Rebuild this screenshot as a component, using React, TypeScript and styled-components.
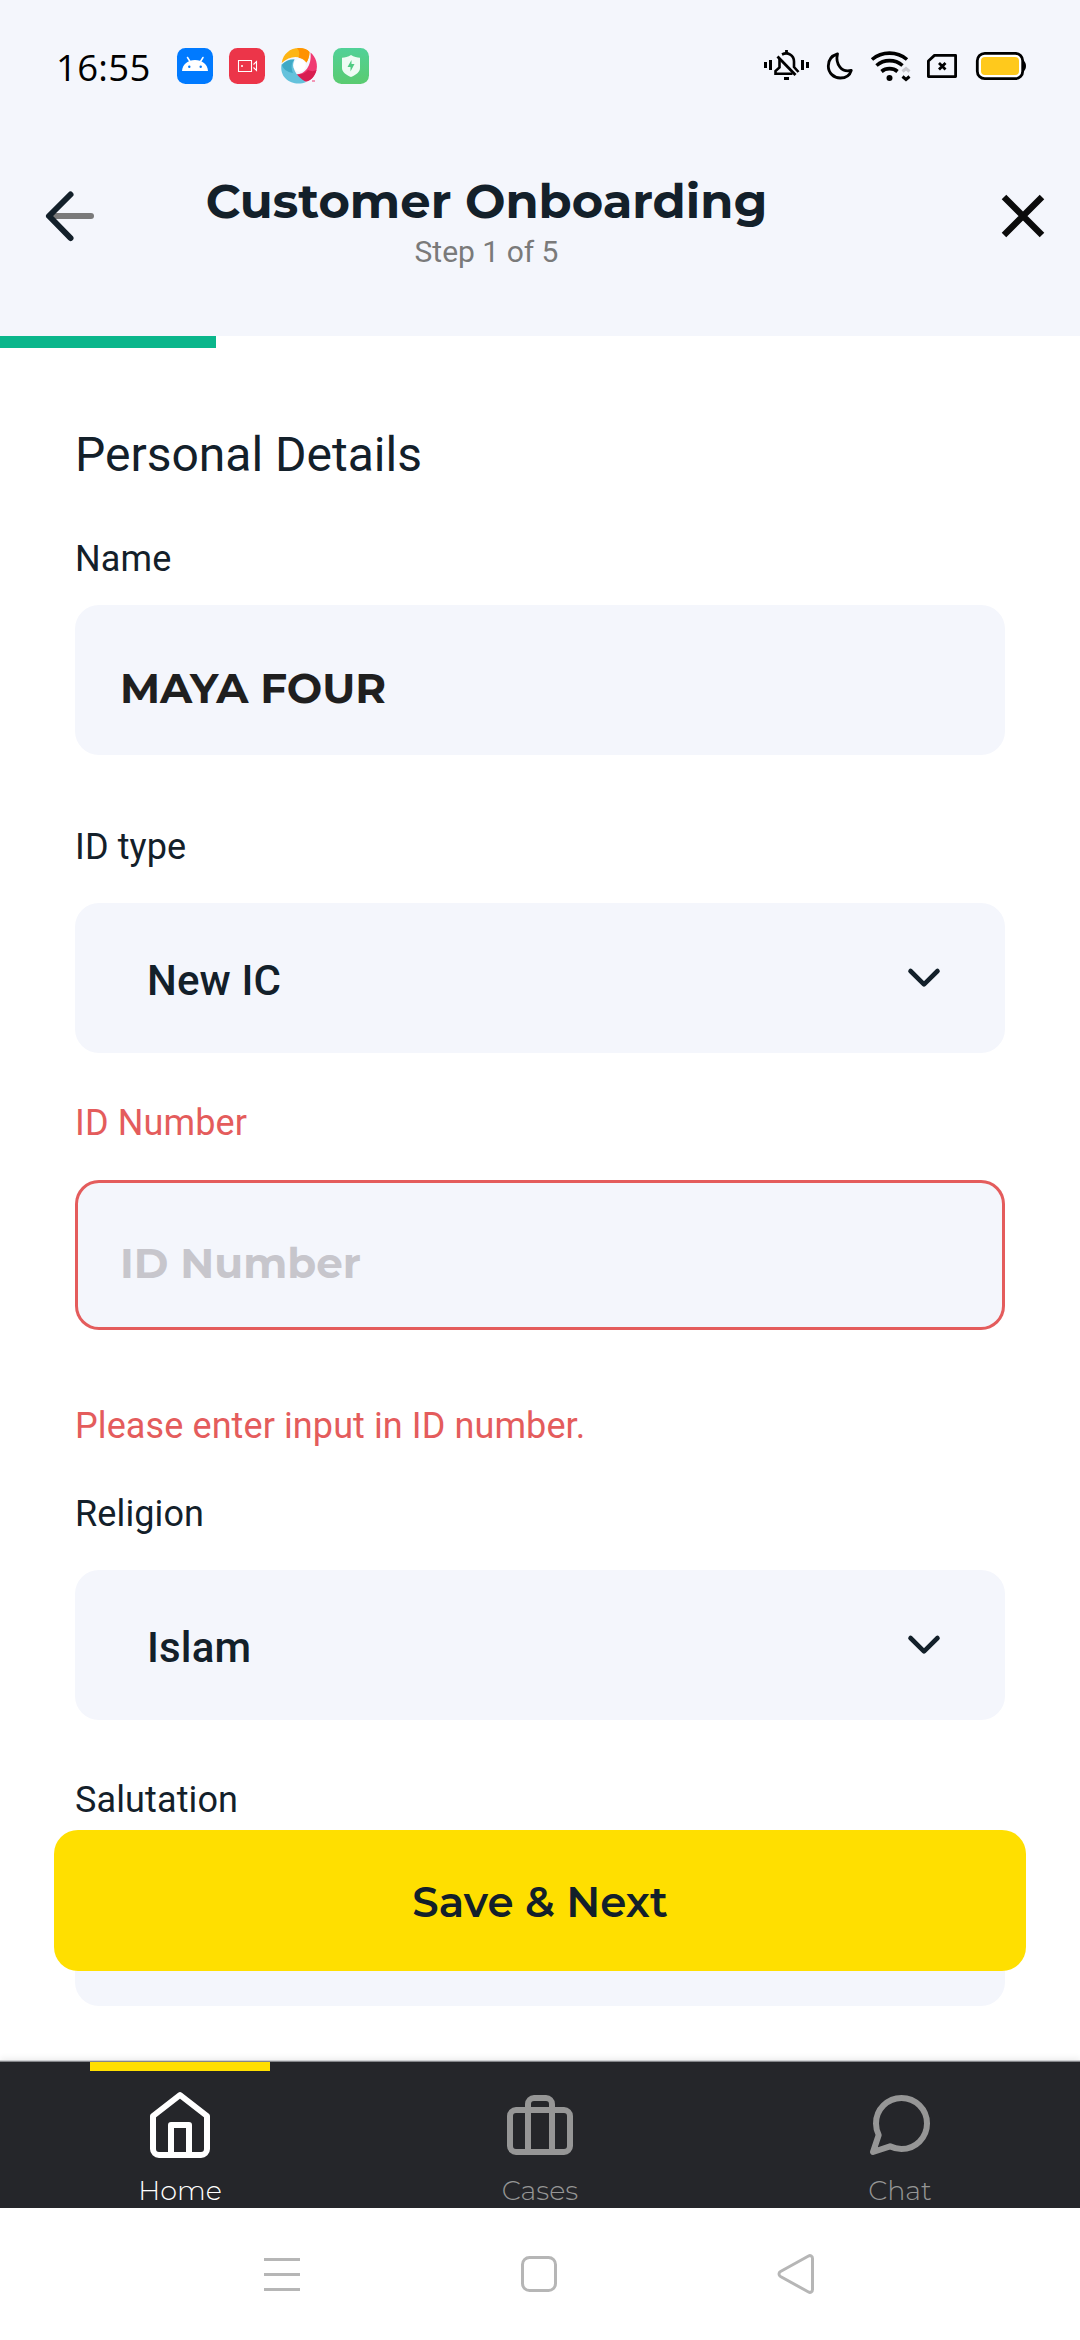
import React from 'react';
import styled, { createGlobalStyle } from 'styled-components';

const ink = '#13202a';
const surface = '#f4f6fc';
const danger = '#e45c5c';
const brand = '#ffdf00';
const display = "Montserrat, Inter, 'Liberation Sans', sans-serif";
const body = "Roboto, 'Liberation Sans', sans-serif";

const GlobalStyle = createGlobalStyle`
  * { box-sizing: border-box; }
  body { margin: 0; background: #fff; }
  button { border: 0; padding: 0; background: none; font: inherit; color: inherit; }
  svg { display: block; flex: none; overflow: visible; }
`;

const Screen = styled.div`
  display: flex;
  flex-direction: column;
  width: 1080px;
  height: 2340px;
  overflow: hidden;
  background: #fff;
  color: ${ink};
  font-family: ${body};
`;

const StatusBar = styled.div`
  display: flex;
  align-items: center;
  height: 132px;
  padding: 0 54px 0 56px;
  background: ${surface};
`;

const Clock = styled.span`
  width: 121px;
  padding-top: 2px;
  font: 400 36.5px/44px 'Open Sans', 'Noto Sans', sans-serif;
  letter-spacing: 0.3px;
  color: #000;
  white-space: nowrap;
`;

const AppIcons = styled.div`
  display: flex;
  gap: 16px;
`;

const StatusIcons = styled.div`
  display: flex;
  align-items: center;
  margin-left: auto;
`;

const StatusSlot = styled.div<{ $gap: number }>`
  margin-left: ${(p) => p.$gap}px;
`;

const Header = styled.header`
  display: flex;
  align-items: flex-start;
  height: 204px;
  padding: 41px 30px 0 43px;
  background: ${surface};
`;

const IconButton = styled.button`
  display: flex;
  align-items: center;
  justify-content: center;
  width: 54px;
  height: 54px;
  margin-top: 16px;
`;

const Titles = styled.div`
  display: flex;
  flex-direction: column;
  align-items: center;
  width: 779px;
  margin-right: auto;
`;

const Title = styled.h1`
  margin: 0;
  font: 700 48px/56px ${display};
  white-space: nowrap;
`;

const Step = styled.div`
  margin-top: 3px;
  font-size: 30px;
  line-height: 40px;
  color: #7a7a7a;
`;

const Track = styled.div`
  height: 12px;
  background: #fff;
`;

const Progress = styled.div`
  width: 20%;
  height: 100%;
  background: #0ab68b;
`;

const Form = styled.main`
  position: relative;
  display: flex;
  flex-direction: column;
  height: 1713px;
  padding: 77px 75px 0;
`;

const Heading = styled.h2`
  margin: 0 0 52px;
  font-size: 48px;
  font-weight: 400;
  line-height: 60px;
`;

const Field = styled.div<{ $gap: number; $after: number }>`
  display: flex;
  flex-direction: column;
  gap: ${(p) => p.$gap}px;
  margin-bottom: ${(p) => p.$after}px;
`;

const Label = styled.label<{ $error?: boolean }>`
  font-size: 36px;
  line-height: 44px;
  letter-spacing: 0.12px;
  color: ${(p) => (p.$error ? danger : ink)};
`;

const ErrorText = styled.p`
  margin: 0 0 44px;
  font-size: 36px;
  line-height: 44px;
  letter-spacing: 0.1px;
  color: ${danger};
`;

const TextBox = styled.div<{ $error?: boolean }>`
  display: flex;
  align-items: center;
  height: 150px;
  padding: 15px 45px 0;
  border-radius: 24px;
  background: ${surface};
  box-shadow: ${(p) => (p.$error ? `inset 0 0 0 3px ${danger}` : 'none')};
  color: ${(p) => (p.$error ? '#c7c6cc' : '#1f1f1f')};
  font: 700 42px/48px ${display};
`;

const SelectBox = styled.div`
  display: flex;
  align-items: center;
  justify-content: space-between;
  height: 150px;
  padding: 0 63px 0 72px;
  border-radius: 24px;
  background: ${surface};
`;

const SelectValue = styled.span`
  padding-top: 5px;
  font-size: 42px;
  font-weight: 500;
  line-height: 50px;
  letter-spacing: 0.15px;
`;

const SaveButton = styled.button`
  position: absolute;
  left: 54px;
  right: 54px;
  bottom: 90px;
  height: 141px;
  padding-top: 3px;
  border-radius: 24px;
  background: ${brand};
  color: ${ink};
  font: 600 42px/48px ${display};
`;

const TabBar = styled.nav`
  display: grid;
  grid-template-columns: repeat(3, 1fr);
  height: 147px;
  border-top: 1px solid #85868a;
  background: #25262a;
  box-shadow: 0 -1px 0 #cfd0d2, 0 -3px 6px rgba(0, 0, 0, 0.07);
  z-index: 1;
`;

const Tab = styled.div<{ $active?: boolean }>`
  display: flex;
  flex-direction: column;
  align-items: center;
  color: ${(p) => (p.$active ? '#fff' : '#969696')};
  font: 300 27px/32px ${display};
`;

const Marker = styled.div<{ $active?: boolean }>`
  width: 180px;
  height: 9px;
  margin-bottom: 18px;
  background: ${(p) => (p.$active ? brand : 'transparent')};
`;

const TabLabel = styled.span`
  margin-top: 14px;
`;

const SystemBar = styled.div`
  display: flex;
  align-items: center;
  justify-content: space-between;
  height: 132px;
  padding: 0 265px 0 263px;
  background: #fff;
  z-index: 2;
`;

const AndroidIcon = () => (
  <svg width="36" height="36" viewBox="0 0 36 36">
    <rect width="36" height="36" rx="8.5" fill="#007aff" />
    <path d="M5 23C5.5 16 11 12 18 12s12.500 4 13 11z" fill="#fff" />
    <path d="M10.500 9.500l2.500 4M26 9.500l-2.500 4" stroke="#fff" strokeWidth="1.500" strokeLinecap="round" />
    <circle cx="12.300" cy="18.800" r="1.200" fill="#007aff" />
    <circle cx="23.700" cy="18.800" r="1.200" fill="#007aff" />
  </svg>
);

const RecorderIcon = () => (
  <svg width="36" height="36" viewBox="0 0 36 36">
    <rect width="36" height="36" rx="8.500" fill="#ec3549" />
    <path d="M9.500 12.500h13v11h-13zM24.500 16.500l3-3v9l-3-3" fill="none" stroke="#fff" strokeWidth="1.100" />
    <circle cx="13" cy="18" r="1" fill="#fff" />
  </svg>
);

const SwirlIcon = () => (
  <svg width="36" height="36" viewBox="0 0 36 36">
    <path d="M.7 15C2 6 9 0 18 0c5 0 8.500 1.500 10.500 4-.2 4.500-1.500 8-3 10.500C20 7 9 7 .7 15z" fill="#fdb515" />
    <path d="M16 .2C21-.3 26 1 28.500 4c0 4.500-1.500 8-3 10.500-2-3-5-4.500-8-4.700C19 5 18 2 16 .2z" fill="#ff9200" />
    <path d="M29.500 4.500C35 9 37.500 17 35 24c-2.500 6-6 9-10.500 9.500-4-.5-7-3-9.500-7 9 0 16-9 14.500-22z" fill="#f03a72" />
    <path d="M15 26.500c5 .5 9-1 12-4.500 3 1.500 6 1.500 8.500 0-2 7-6 11-11 11.500-4-.5-7-3-9.500-7z" fill="#d81e50" />
    <path d="M.5 16.500C4 13 9 11 13.500 11.500 10 18 14 28 25 34 14 39-2 32 .5 16.500z" fill="#64c2dc" />
    <path d="M1 17C4 13 9 11 13.500 11.500 10 15 10 20 12 25 6 24 2 21 1 17z" fill="#3fa9c5" />
    <circle cx="18.500" cy="17.500" r="6.200" fill="#fff" />
    <path d="M31 33h3" stroke="#f03a72" />
  </svg>
);

const ShieldIcon = () => (
  <svg width="36" height="36" viewBox="0 0 36 36">
    <defs>
      <linearGradient id="shield" x1="0" y1="0" x2="0" y2="1">
        <stop offset="0" stopColor="#51d198" />
        <stop offset="1" stopColor="#5acb70" />
      </linearGradient>
    </defs>
    <rect width="36" height="36" rx="8.500" fill="url(#shield)" />
    <path d="M18 7c3 2 6 2.700 9 2.700V20c0 4-4 7-9 9-5-2-9-5-9-9V9.700C12 9.700 15 9 18 7z" fill="#effbf4" />
    <path d="M18.500 12l-4 7h3v4.500l4-7.500h-3z" fill="#50cc83" />
  </svg>
);

const MutedBellIcon = () => (
  <svg width="45" height="32" viewBox="0 0 45 32" fill="none" stroke="#000" strokeWidth="3">
    <path d="M1.500 12v6M6.500 10v10M38.500 10v10M43.500 12v6" />
    <path d="M22.500 0v3M20 28.500h5" strokeWidth="2.800" />
    <path d="M18 4.500c6-3 12 1 12 7v5.500l4.500 5" strokeWidth="2.600" />
    <path d="M15.500 9v8.500L11.500 21v2.800h17" strokeWidth="2.600" />
    <path d="M13.500 6.500l18 18.500" strokeWidth="2.800" />
  </svg>
);

const MoonIcon = () => (
  <svg width="26" height="28" viewBox="0 0 26 28" fill="none" stroke="#000" strokeWidth="2.800" strokeLinejoin="round">
    <path d="M10.500 1.800C5 3.500 1.300 8 1.300 14c0 7 5.500 12 12 12 5.200 0 9.500-2.600 11-7.700C15 21 8 12.500 10.500 1.800z" />
  </svg>
);

const WifiIcon = () => (
  <svg width="40" height="31" viewBox="0 0 40 31" fill="none" stroke="#000" strokeWidth="3.600">
    <path d="M1 8.500c10-8.500 25-8.500 35 0M5.500 14.500c7.500-6.500 18.500-6.500 26 0M10.500 20.500c4.500-3.800 11.500-3.800 16 0" />
    <circle cx="18.500" cy="27" r="3" fill="#000" stroke="none" />
    <path d="M31.500 20.500l3.500-3 3.500 3" stroke="#c9c9cf" strokeWidth="3" />
    <path d="M31.500 25.500l3.500 3 3.500-3" strokeWidth="3" />
  </svg>
);

const SimIcon = () => (
  <svg width="30" height="24" viewBox="0 0 30 24" fill="none" stroke="#000" strokeWidth="2.800" strokeLinejoin="round">
    <path d="M7.500 1.400h21.100v21.200H1.400V7z" />
    <path d="M12 9l6.500 6.500M18.500 9L12 15.500" />
  </svg>
);

const BatteryIcon = () => (
  <svg width="50" height="28" viewBox="0 0 50 28">
    <path d="M47 8.500c4 1.500 4 9.500 0 11z" fill="#000" />
    <rect x="1.300" y="1.300" width="45.400" height="25.400" rx="7.500" fill="#fff" stroke="#000" strokeWidth="2.800" />
    <rect x="5" y="5" width="38" height="18" rx="4" fill="#ffc91c" />
  </svg>
);

const BackIcon = () => (
  <svg width="54" height="54" viewBox="0 0 54 54" fill="none" strokeWidth="6" strokeLinecap="round" strokeLinejoin="round">
    <path d="M9 27h39" stroke="#7a7a7a" />
    <path d="M27.500 5.500L6 27l21.500 22" stroke={ink} />
  </svg>
);

const CloseIcon = () => (
  <svg width="44" height="44" viewBox="0 0 44 44" stroke="#0b0b0b" strokeWidth="6.400">
    <path d="M3 3l38 38M41 3L3 41" />
  </svg>
);

const ChevronIcon = () => (
  <svg width="36" height="24" viewBox="0 0 36 24" fill="none" stroke={ink} strokeWidth="4.600" strokeLinecap="round" strokeLinejoin="round">
    <path d="M4.500 5L18 18.300 31.500 5" />
  </svg>
);

const HomeIcon = () => (
  <svg width="72" height="72" viewBox="0 0 72 72" fill="none" stroke="currentColor" strokeWidth="6" strokeLinejoin="round">
    <path d="M9 27L36 6l27 21v33a6 6 0 0 1-6 6H15a6 6 0 0 1-6-6z" />
    <path d="M27 66V36h18v30" />
  </svg>
);

const CasesIcon = () => (
  <svg width="72" height="72" viewBox="0 0 72 72" fill="none" stroke="currentColor" strokeWidth="6">
    <rect x="6" y="21" width="60" height="42" rx="6" />
    <path d="M24 63V15a6 6 0 0 1 6-6h12a6 6 0 0 1 6 6v48" />
  </svg>
);

const ChatIcon = () => (
  <svg width="72" height="72" viewBox="0 0 72 72" fill="none" stroke="currentColor" strokeWidth="6" strokeLinejoin="round">
    <path d="M63 34.500A25.500 25.500 0 0 1 37.500 60a25.500 25.500 0 0 1-11.500-2.700L9 63l5.700-17A25.500 25.500 0 0 1 12 34.500 25.500 25.500 0 0 1 37.500 9 25.500 25.500 0 0 1 63 34.500z" />
  </svg>
);

const RecentsIcon = () => (
  <svg width="38" height="36" viewBox="0 0 38 36" stroke="#b6b6b6" strokeWidth="3">
    <path d="M1 3.500h36M1 18.500h36M1 33.500h36" />
  </svg>
);

const HomeKeyIcon = () => (
  <svg width="36" height="36" viewBox="0 0 36 36">
    <rect x="1.500" y="1.500" width="33" height="33" rx="7" fill="none" stroke="#b6b6b6" strokeWidth="3" />
  </svg>
);

const BackKeyIcon = () => (
  <svg width="38" height="40" viewBox="0 0 38 40" fill="none" stroke="#b6b6b6" strokeWidth="3">
    <path d="M3.500 17.500L31.500 2c2-1 4 .2 4 2.500v31c0 2.300-2 3.500-4 2.500L3.500 22.500c-2-1.200-2-3.800 0-5z" />
  </svg>
);

const Select = ({ value }: { value?: string }) => (
  <SelectBox>
    <SelectValue>{value}</SelectValue>
    {value && <ChevronIcon />}
  </SelectBox>
);

const tabs = [
  { label: 'Home', Icon: HomeIcon, active: true },
  { label: 'Cases', Icon: CasesIcon, active: false },
  { label: 'Chat', Icon: ChatIcon, active: false },
];

export default function App() {
  return (
    <Screen>
      <GlobalStyle />
      <StatusBar>
        <Clock>16:55</Clock>
        <AppIcons>
          <AndroidIcon />
          <RecorderIcon />
          <SwirlIcon />
          <ShieldIcon />
        </AppIcons>
        <StatusIcons>
          <MutedBellIcon />
          <StatusSlot $gap={18}><MoonIcon /></StatusSlot>
          <StatusSlot $gap={18}><WifiIcon /></StatusSlot>
          <StatusSlot $gap={16}><SimIcon /></StatusSlot>
          <StatusSlot $gap={19}><BatteryIcon /></StatusSlot>
        </StatusIcons>
      </StatusBar>
      <Header>
        <IconButton aria-label="Back"><BackIcon /></IconButton>
        <Titles>
          <Title>Customer Onboarding</Title>
          <Step>Step 1 of 5</Step>
        </Titles>
        <IconButton aria-label="Close"><CloseIcon /></IconButton>
      </Header>
      <Track><Progress /></Track>
      <Form>
        <Heading>Personal Details</Heading>
        <Field $gap={24} $after={70}>
          <Label>Name</Label>
          <TextBox>MAYA FOUR</TextBox>
        </Field>
        <Field $gap={34} $after={48}>
          <Label>ID type</Label>
          <Select value="New IC" />
        </Field>
        <Field $gap={35} $after={74}>
          <Label $error>ID Number</Label>
          <TextBox $error>ID Number</TextBox>
        </Field>
        <ErrorText>Please enter input in ID number.</ErrorText>
        <Field $gap={34} $after={58}>
          <Label>Religion</Label>
          <Select value="Islam" />
        </Field>
        <Field $gap={34} $after={0}>
          <Label>Salutation</Label>
          <Select />
        </Field>
        <SaveButton>Save &amp; Next</SaveButton>
      </Form>
      <TabBar>
        {tabs.map(({ label, Icon, active }) => (
          <Tab key={label} $active={active}>
            <Marker $active={active} />
            <Icon />
            <TabLabel>{label}</TabLabel>
          </Tab>
        ))}
      </TabBar>
      <SystemBar>
        <RecentsIcon />
        <HomeKeyIcon />
        <BackKeyIcon />
      </SystemBar>
    </Screen>
  );
}
